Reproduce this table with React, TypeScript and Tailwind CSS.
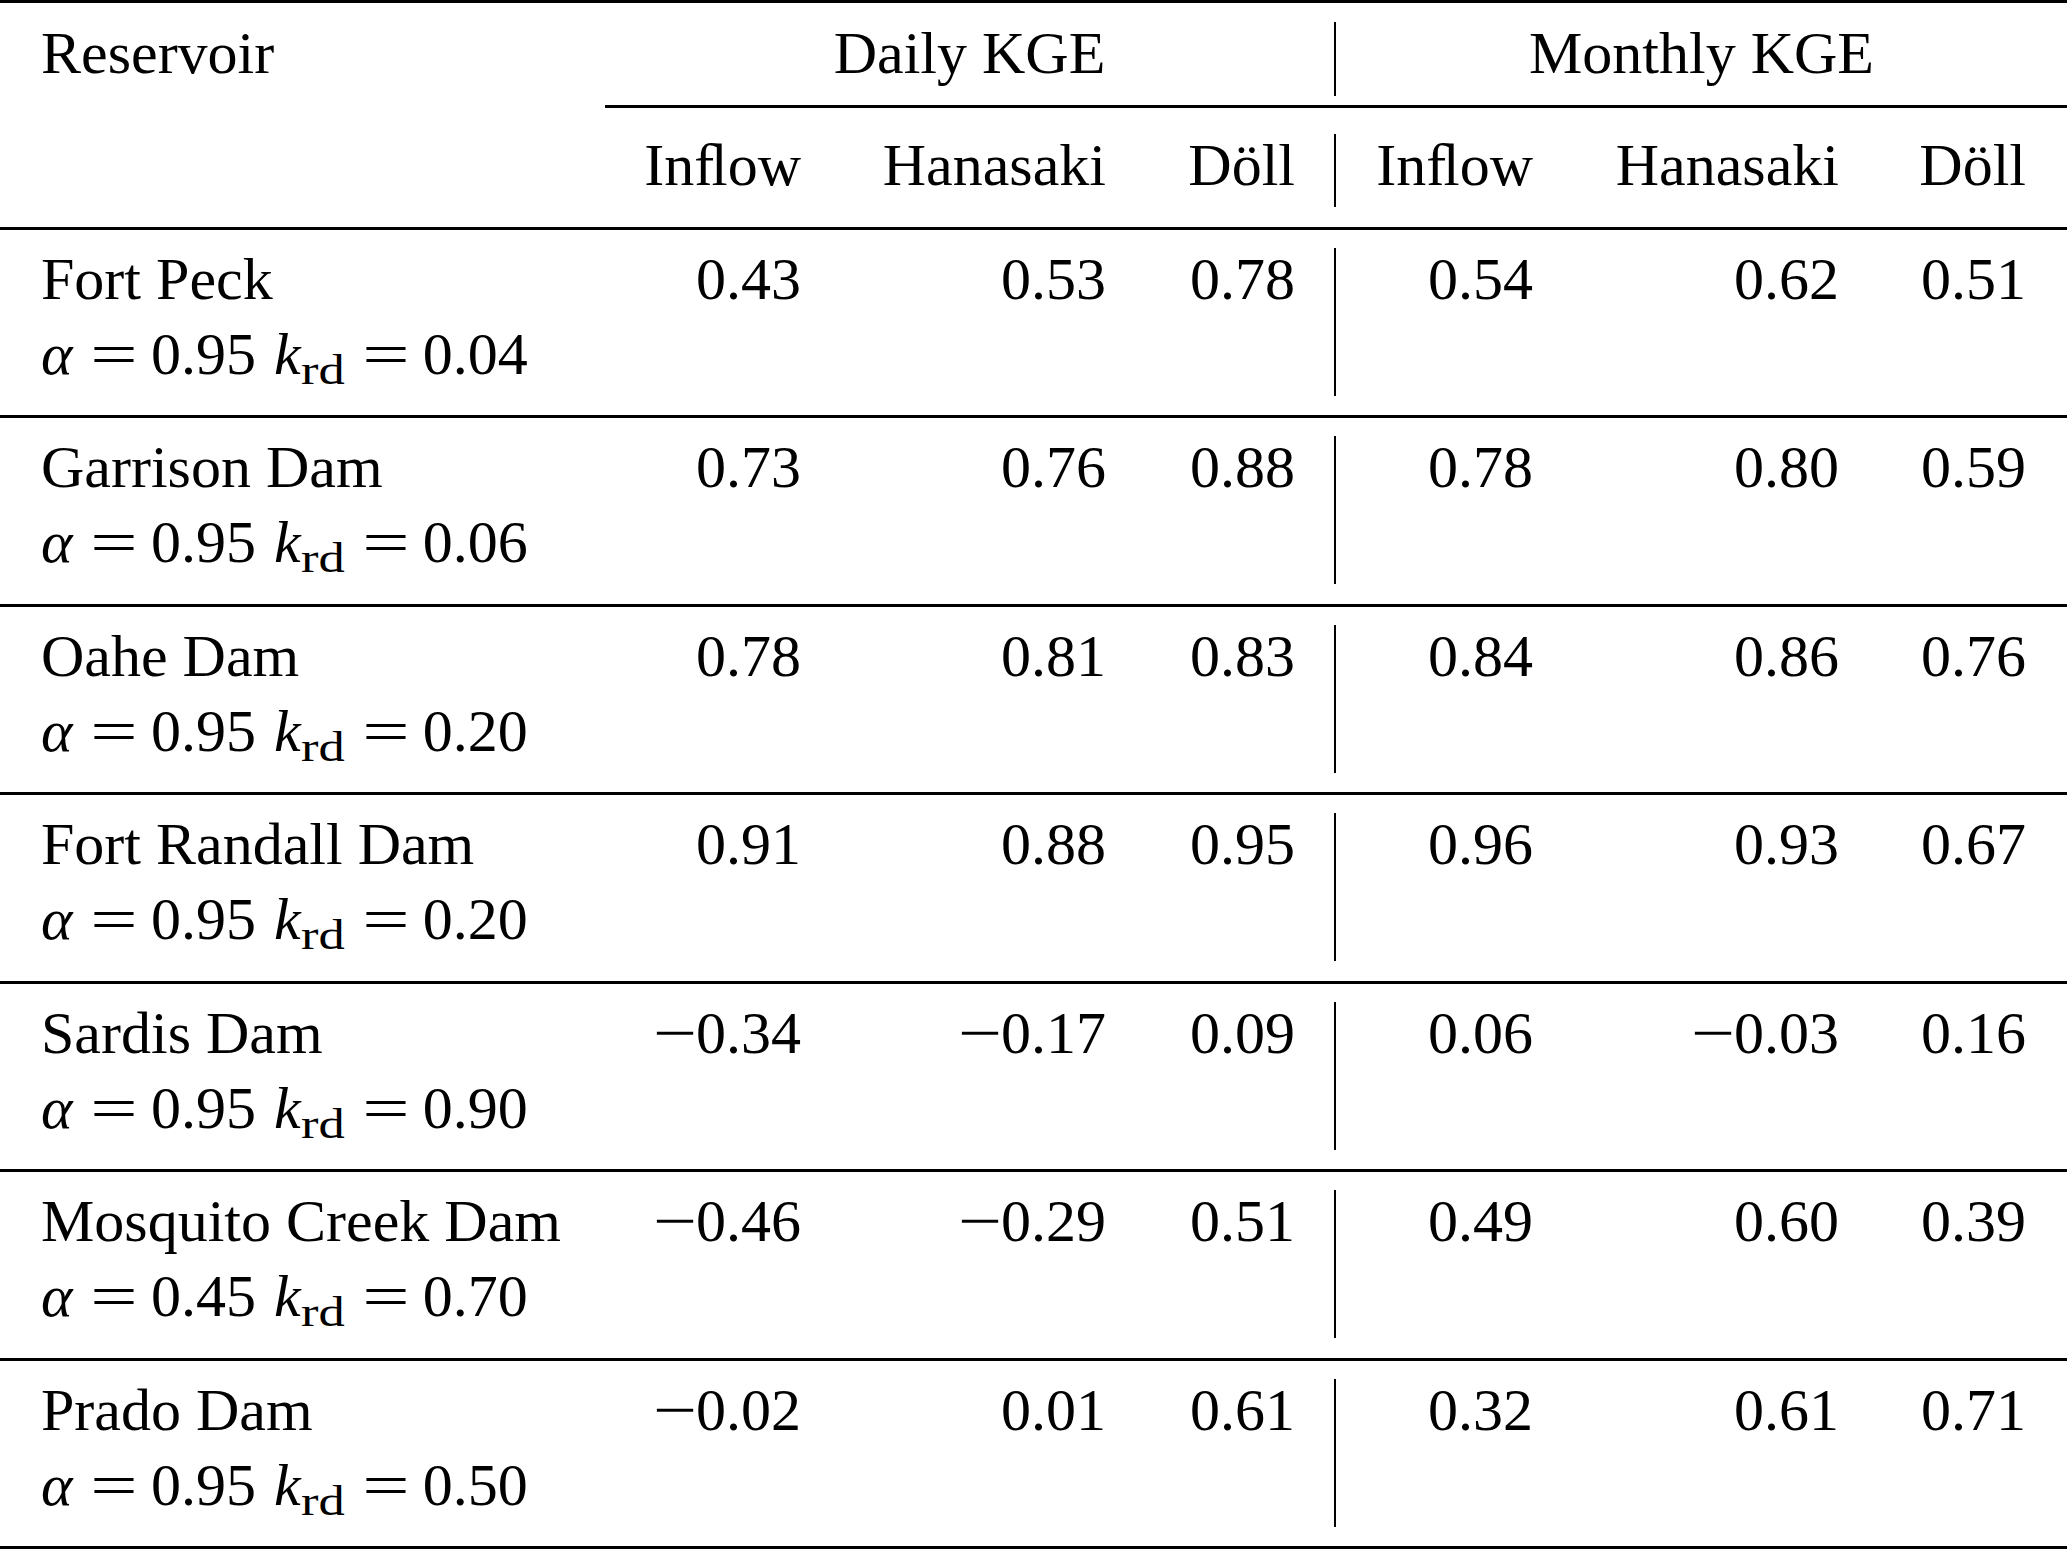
const cols = "grid grid-cols-[605px_230px_306px_193px_2px_229px_307px_195px]";

type Row = { name: string; alpha: string; krd: string; vals: string[] };

const rows: Row[] = [
  { name: "Fort Peck", alpha: "0.95", krd: "0.04", vals: ["0.43", "0.53", "0.78", "0.54", "0.62", "0.51"] },
  { name: "Garrison Dam", alpha: "0.95", krd: "0.06", vals: ["0.73", "0.76", "0.88", "0.78", "0.80", "0.59"] },
  { name: "Oahe Dam", alpha: "0.95", krd: "0.20", vals: ["0.78", "0.81", "0.83", "0.84", "0.86", "0.76"] },
  { name: "Fort Randall Dam", alpha: "0.95", krd: "0.20", vals: ["0.91", "0.88", "0.95", "0.96", "0.93", "0.67"] },
  { name: "Sardis Dam", alpha: "0.95", krd: "0.90", vals: ["-0.34", "-0.17", "0.09", "0.06", "-0.03", "0.16"] },
  { name: "Mosquito Creek Dam", alpha: "0.45", krd: "0.70", vals: ["-0.46", "-0.29", "0.51", "0.49", "0.60", "0.39"] },
  { name: "Prado Dam", alpha: "0.95", krd: "0.50", vals: ["-0.02", "0.01", "0.61", "0.32", "0.61", "0.71"] },
];

// right padding of each numeric column, in order (the bar sits between 3rd and 4th)
const pads = ["pr-[34px]", "pr-[35px]", "pr-[39px]", "pr-[32px]", "pr-[33px]", "pr-[41px]"];

function Num({ v }: { v: string }) {
  if (!v.startsWith("-")) return <>{v}</>;
  return (
    <>
      <span className="inline-block w-[43px] text-left">
        <span className="inline-block origin-left scale-x-[1.3]">−</span>
      </span>
      {v.slice(1)}
    </>
  );
}

function Eq({ className = "" }: { className?: string }) {
  return (
    <span className={`inline-block w-[42px] text-center ${className}`}>
      <span className="inline-block scale-x-[1.4]">=</span>
    </span>
  );
}

function Params({ alpha, krd }: { alpha: string; krd: string }) {
  return (
    <div className="h-[75px] whitespace-nowrap">
      <span className="inline-block w-[52px] italic">α</span>
      <Eq className="mr-[16px]" />
      {alpha}
      <span className="ml-[18px] italic">k</span>
      <span className="inline-block w-[40px] align-[-10px] text-[42px] leading-none">
        <span className="inline-block origin-left scale-x-[1.25]">rd</span>
      </span>
      <Eq className="ml-[24px] mr-[16px]" />
      {krd}
    </div>
  );
}

function Rule() {
  return <div className="h-[3px] bg-black" />;
}

export default function App() {
  return (
    <div
      className="h-[1549px] w-[2067px] overflow-hidden bg-white text-[60px] leading-[75px] text-black"
      style={{ fontFamily: '"Liberation Serif", "Times New Roman", serif' }}
    >
      <Rule />

      {/* header, first line */}
      <div className="h-[102px] grid grid-cols-[605px_729px_2px_731px]">
        <div className="pl-[41px] pt-[13px]">Reservoir</div>
        <div className="pt-[13px] text-center">Daily KGE</div>
        <div className="mt-[19px] h-[74px] bg-black" />
        <div className="pt-[13px] text-center">Monthly KGE</div>
      </div>
      <div className="ml-[605px] h-[3px] bg-black" />

      {/* header, second line */}
      <div className={`${cols} h-[119px]`}>
        <div />
        <div className={`pt-[20px] text-right ${pads[0]}`}>Inﬂow</div>
        <div className={`pt-[20px] text-right ${pads[1]}`}>Hanasaki</div>
        <div className={`pt-[20px] text-right ${pads[2]}`}>Döll</div>
        <div className="mt-[26px] h-[73px] bg-black" />
        <div className={`pt-[20px] text-right ${pads[3]}`}>Inﬂow</div>
        <div className={`pt-[20px] text-right ${pads[4]}`}>Hanasaki</div>
        <div className={`pt-[20px] text-right ${pads[5]}`}>Döll</div>
      </div>
      <Rule />

      {rows.map((r) => (
        <div key={r.name}>
          <div className={`${cols} h-[185.43px]`}>
            <div className="pl-[41px] pt-[12px] whitespace-nowrap">
              <div>{r.name}</div>
              <Params alpha={r.alpha} krd={r.krd} />
            </div>
            {r.vals.slice(0, 3).map((v, i) => (
              <div key={i} className={`pt-[12px] text-right whitespace-nowrap ${pads[i]}`}>
                <Num v={v} />
              </div>
            ))}
            <div className="mt-[18px] h-[148px] bg-black" />
            {r.vals.slice(3).map((v, i) => (
              <div key={i} className={`pt-[12px] text-right whitespace-nowrap ${pads[i + 3]}`}>
                <Num v={v} />
              </div>
            ))}
          </div>
          <Rule />
        </div>
      ))}
    </div>
  );
}
